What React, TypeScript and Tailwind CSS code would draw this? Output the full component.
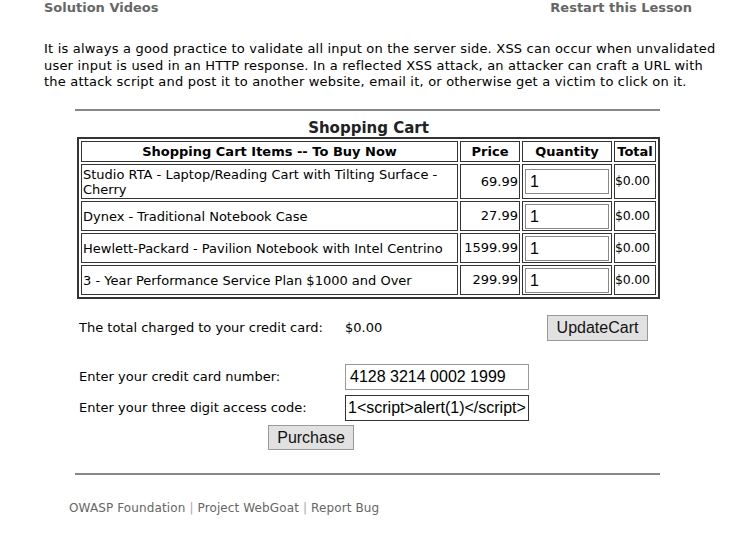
import React from 'react';

const items = [
  { name: 'Studio RTA - Laptop/Reading Cart with Tilting Surface - Cherry', price: '69.99' },
  { name: 'Dynex - Traditional Notebook Case', price: '27.99' },
  { name: 'Hewlett-Packard - Pavilion Notebook with Intel Centrino', price: '1599.99' },
  { name: '3 - Year Performance Service Plan $1000 and Over', price: '299.99' },
];

export default function App() {
  return (
    <div className="w-[744px] h-[549px] bg-white overflow-hidden font-['DejaVu_Sans',sans-serif] text-black">
      {/* lesson links */}
      <div className="flex justify-between pl-[44px] pr-[52px] text-[13px] font-bold text-[#666] leading-[15px]">
        <span>Solution Videos</span>
        <span>Restart this Lesson</span>
      </div>

      <p className="mt-[26px] ml-[44px] mr-[20px] text-[13px] leading-[16.5px] tracking-[0.2px]">
        It is always a good practice to validate all input on the server side. XSS can occur when unvalidated user input is used in an HTTP response. In a reflected XSS attack, an attacker can craft a URL with the attack script and post it to another website, email it, or otherwise get a victim to click on it.
      </p>

      <hr className="mt-[18px] ml-[75px] w-[585px] border-t-2 border-[#888]" />

      <div className="ml-[77px] w-[583px] text-[13px]">
        <div className="text-center font-bold text-[15px] leading-[18px] text-[#222] mt-[8px]">Shopping Cart</div>
        <table className="w-[583px] border-separate border-spacing-[2px] border-2 border-[#333] bg-white">
          <thead>
            <tr className="h-[21px]">
              <th className="border border-[#333] px-[1px] font-bold leading-[15px]">Shopping Cart Items -- To Buy Now</th>
              <th className="border border-[#333] px-[1px] font-bold w-[60px]">Price</th>
              <th className="border border-[#333] px-[1px] font-bold w-[90px]">Quantity</th>
              <th className="border border-[#333] px-0 font-bold w-[42px]">Total</th>
            </tr>
          </thead>
          <tbody>
            {items.map((it, i) => (
              <tr key={i} className={i === 0 ? 'h-[35px]' : 'h-[30px]'}>
                <td className="border border-[#333] px-[1px] leading-[15px] text-left">{it.name}</td>
                <td className="border border-[#333] px-[1px] text-right">{it.price}</td>
                <td className="border border-[#333] p-0 pl-[2px]">
                  <div className="w-[84px] h-[25px] border border-[#888] px-[4px] text-[16px] leading-[23px] font-['Liberation_Sans',Arial,sans-serif]">1</div>
                </td>
                <td className="border border-[#333] px-0 text-[12.5px] tracking-[-0.2px]">$0.00</td>
              </tr>
            ))}
          </tbody>
        </table>
      </div>

      {/* totals and card details */}
      <div className="ml-[79px] mt-[16px] w-[570px] text-[13px]">
        <div className="flex items-center h-[25px]">
          <span className="w-[266px]">The total charged to your credit card:</span>
          <span>$0.00</span>
          <button className="ml-auto mr-[1px] w-[101px] h-[26px] border border-[#999] bg-[#e1e1e1] text-[16px] leading-[24px] font-['Liberation_Sans',Arial,sans-serif] text-[#111]">UpdateCart</button>
        </div>
        <div className="flex items-center h-[26px] mt-[24px]">
          <span className="w-[266px]">Enter your credit card number:</span>
          <div className="w-[184px] h-[26px] border border-[#999] px-[4px] text-[16px] leading-[24px] font-['Liberation_Sans',Arial,sans-serif]">4128 3214 0002 1999</div>
        </div>
        <div className="flex items-center h-[26px] mt-[5px]">
          <span className="w-[266px]">Enter your three digit access code:</span>
          <div className="w-[184px] h-[26px] border border-[#333] px-[2px] text-[16px] leading-[24px] font-['Liberation_Sans',Arial,sans-serif] whitespace-nowrap overflow-hidden">1&lt;script&gt;alert(1)&lt;/script&gt;</div>
        </div>
        <div className="mt-[4px] ml-[189px]">
          <button className="w-[86px] h-[25px] border border-[#999] bg-[#e1e1e1] text-[16px] leading-[23px] font-['Liberation_Sans',Arial,sans-serif] text-[#111]">Purchase</button>
        </div>
      </div>

      <hr className="mt-[23px] ml-[75px] w-[585px] border-t-2 border-[#888]" />

      <div className="ml-[69px] mt-[24px] text-[12px] tracking-[0.12px] text-[#666]">
        OWASP Foundation <span className="text-[#aaa]">|</span> Project WebGoat <span className="text-[#aaa]">|</span> Report Bug
      </div>
    </div>
  );
}
